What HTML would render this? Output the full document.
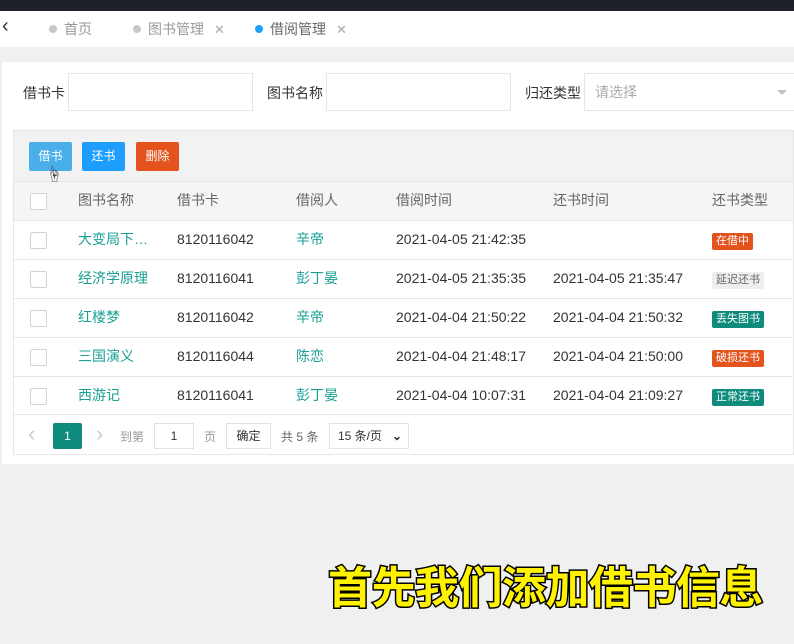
<!DOCTYPE html>
<html><head><meta charset="utf-8"><style>
*{margin:0;padding:0;box-sizing:border-box}
body{width:794px;height:644px;overflow:hidden;background:#f0f0f0;font-family:"Liberation Sans","Noto Sans CJK SC",sans-serif;font-size:14px;color:#333;position:relative}
.abs{position:absolute}
.top{left:0;top:0;width:794px;height:11px;background:#1f2128}
.tabs{left:0;top:11px;width:794px;height:36px;background:#fff;}
.tab{position:absolute;top:8px;font-size:14px;color:#999;line-height:20px}
.dot{display:inline-block;width:8px;height:8px;border-radius:50%;background:#c8c8c8;margin-right:7px;vertical-align:1px}
.x{color:#aaa;margin-left:10px;font-size:13px}
.panel{left:2px;top:62px;width:792px;height:402px;background:#fff}
.lbl{font-size:14px;color:#333;line-height:20px}
.inp{border:1px solid #e6e6e6;background:#fff;height:38px}
.tbl{left:13px;top:130px;width:781px;height:325px;border:1px solid #e6e6e6;background:#fff}
.tool{left:0;top:0;width:100%;height:50px;background:#f2f2f2}
.btn{position:absolute;top:11px;width:43px;height:29px;color:#fff;font-size:12px;text-align:center;line-height:29px;border-radius:2px}
.row{position:absolute;left:0;width:100%;border-top:1px solid #e6e6e6;height:39px}
.cell{position:absolute;top:8px;font-size:14px;white-space:nowrap;line-height:20px;height:20px}
.cb{position:absolute;left:16px;top:11px;width:17px;height:17px;border:1px solid #d2d2d2;background:#fff;border-radius:2px}
.link{color:#1aa094}
.tag{position:absolute;top:12px;left:698px;font-size:11px;color:#fff;padding:0 4px;height:17px;line-height:17px;border-radius:2px}
.sub{left:328px;top:552px;font-size:44px;font-weight:bold;color:#fff200;font-family:"Noto Sans CJK SC",sans-serif;-webkit-text-stroke:3px #000;paint-order:stroke fill;letter-spacing:-0.5px;white-space:nowrap;line-height:64px}
</style></head><body>
<div class="abs top"></div>
<div class="abs tabs">
 <div class="tab" style="left:2px;top:5px;color:#333;font-size:20px">‹</div>
 <div class="tab" style="left:49px"><span class="dot"></span>首页</div>
 <div class="tab" style="left:133px"><span class="dot"></span>图书管理<span class="x">✕</span></div>
 <div class="tab" style="left:255px;color:#666"><span class="dot" style="background:#1e9fff"></span>借阅管理<span class="x">✕</span></div>
</div>
<div class="abs panel">
 <div class="abs lbl" style="left:21px;top:21px">借书卡</div>
 <div class="abs inp" style="left:66px;top:11px;width:185px"></div>
 <div class="abs lbl" style="left:265px;top:21px">图书名称</div>
 <div class="abs inp" style="left:324px;top:11px;width:185px"></div>
 <div class="abs lbl" style="left:523px;top:21px">归还类型</div>
 <div class="abs inp" style="left:582px;top:11px;width:212px;color:#aaa;padding:8px 10px;font-size:14px;line-height:20px">请选择<span style="position:absolute;right:8px;top:16px;border:5px solid transparent;border-top-color:#c2c2c2"></span></div>
</div>
<div class="abs tbl">
 <div class="abs tool">
  <div class="btn" style="left:15px;background:#4aaeea">借书</div>
  <div class="btn" style="left:68px;background:#1e9fff">还书</div>
  <div class="btn" style="left:122px;background:#e4531e">删除</div>
 </div>
 <div class="row" style="top:50px;background:#f5f5f5;color:#666">
  <div class="cb"></div>
  <div class="cell" style="left:64px">图书名称</div><div class="cell" style="left:163px">借书卡</div><div class="cell" style="left:282px">借阅人</div><div class="cell" style="left:382px">借阅时间</div><div class="cell" style="left:539px">还书时间</div><div class="cell" style="left:698px">还书类型</div>
 </div>
 <div class="row" style="top:89px"><div class="cb"></div><div class="cell link" style="left:64px">大变局下…</div><div class="cell" style="left:163px">8120116042</div><div class="cell link" style="left:282px">辛帝</div><div class="cell" style="left:382px">2021-04-05 21:42:35</div><div class="tag" style="background:#e4531e">在借中</div></div>
 <div class="row" style="top:128px"><div class="cb"></div><div class="cell link" style="left:64px">经济学原理</div><div class="cell" style="left:163px">8120116041</div><div class="cell link" style="left:282px">彭丁晏</div><div class="cell" style="left:382px">2021-04-05 21:35:35</div><div class="cell" style="left:539px">2021-04-05 21:35:47</div><div class="tag" style="background:#eee;color:#666">延迟还书</div></div>
 <div class="row" style="top:167px"><div class="cb"></div><div class="cell link" style="left:64px">红楼梦</div><div class="cell" style="left:163px">8120116042</div><div class="cell link" style="left:282px">辛帝</div><div class="cell" style="left:382px">2021-04-04 21:50:22</div><div class="cell" style="left:539px">2021-04-04 21:50:32</div><div class="tag" style="background:#0e8b7c">丢失图书</div></div>
 <div class="row" style="top:206px"><div class="cb"></div><div class="cell link" style="left:64px">三国演义</div><div class="cell" style="left:163px">8120116044</div><div class="cell link" style="left:282px">陈恋</div><div class="cell" style="left:382px">2021-04-04 21:48:17</div><div class="cell" style="left:539px">2021-04-04 21:50:00</div><div class="tag" style="background:#e4531e">破损还书</div></div>
 <div class="row" style="top:245px"><div class="cb"></div><div class="cell link" style="left:64px">西游记</div><div class="cell" style="left:163px">8120116041</div><div class="cell link" style="left:282px">彭丁晏</div><div class="cell" style="left:382px">2021-04-04 10:07:31</div><div class="cell" style="left:539px">2021-04-04 21:09:27</div><div class="tag" style="background:#0e8b7c">正常还书</div></div>
 <div class="row" style="top:283px;height:41px;font-size:12px;color:#999">
  <div class="abs" style="left:14px;top:6px;font-size:22px;color:#ccc;line-height:26px">‹</div>
  <div class="abs" style="left:39px;top:8px;width:29px;height:26px;background:#0e8b7c;color:#fff;text-align:center;line-height:26px;border-radius:2px">1</div>
  <div class="abs" style="left:82px;top:6px;font-size:22px;color:#ccc;line-height:26px">›</div>
  <div class="abs" style="left:106px;top:13px">到第</div>
  <div class="abs" style="left:140px;top:8px;width:40px;height:26px;border:1px solid #e2e2e2;text-align:center;line-height:24px;color:#333">1</div>
  <div class="abs" style="left:190px;top:13px">页</div>
  <div class="abs" style="left:212px;top:8px;width:45px;height:26px;border:1px solid #e2e2e2;text-align:center;line-height:24px;color:#333">确定</div>
  <div class="abs" style="left:267px;top:13px;color:#666">共 5 条</div>
  <div class="abs" style="left:315px;top:8px;width:80px;height:26px;border:1px solid #e2e2e2;line-height:24px;padding-left:8px;color:#333">15 条/页<span style="position:absolute;right:6px;top:0;font-weight:bold">⌄</span></div>
 </div>
</div>
<div class="abs" style="left:46px;top:161px;font-size:16px">☝</div>
<div class="abs sub">首先我们添加借书信息</div>
</body></html>
